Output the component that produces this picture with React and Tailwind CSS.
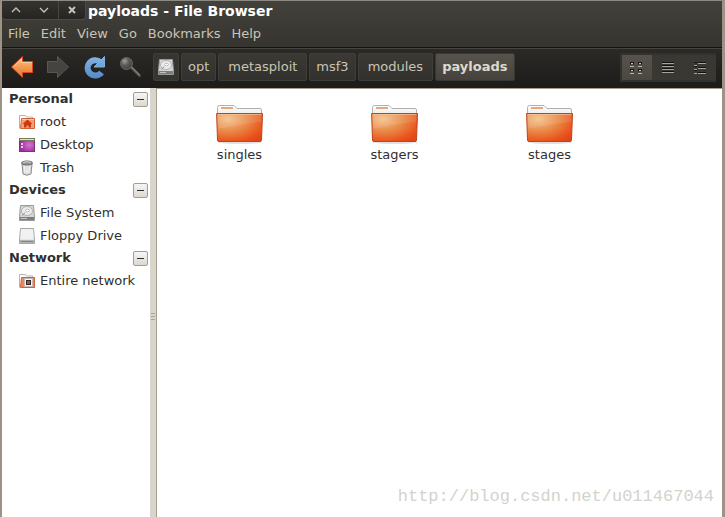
import React, { useState } from "react";

const places = [
  {
    title: "Personal",
    items: [
      { name: "root", icon: HomeIcon },
      { name: "Desktop", icon: DesktopIcon },
      { name: "Trash", icon: TrashIcon },
    ],
  },
  {
    title: "Devices",
    items: [
      { name: "File System", icon: DiskIcon },
      { name: "Floppy Drive", icon: FloppyIcon },
    ],
  },
  {
    title: "Network",
    items: [{ name: "Entire network", icon: NetworkIcon }],
  },
];

const menus = ["File", "Edit", "View", "Go", "Bookmarks", "Help"];
const crumbs = ["opt", "metasploit", "msf3", "modules", "payloads"];
const folders = ["singles", "stagers", "stages"];

function BackIcon() {
  return (
    <svg width="24" height="24" viewBox="0 0 24 24">
      <defs>
        <linearGradient id="back" x1="0" y1="0" x2="0" y2="1">
          <stop offset="0" stopColor="#fbc58a" />
          <stop offset="0.5" stopColor="#f39b52" />
          <stop offset="1" stopColor="#e2703a" />
        </linearGradient>
      </defs>
      <path d="M1.5 12 12.5 1.5V6.5H22.5V17.5H12.5V22.5Z" fill="url(#back)" stroke="#d9481c" strokeLinejoin="round" />
      <path d="M3.5 11.7 11.6 4V7.5H21.5" fill="none" stroke="#fde0b8" strokeOpacity="0.7" />
    </svg>
  );
}

function ForwardIcon() {
  return (
    <svg width="24" height="24" viewBox="0 0 24 24">
      <path d="M22.5 12 11.5 1.5V6.5H1.5V17.5H11.5V22.5Z" fill="#464441" stroke="#5a5753" strokeLinejoin="round" />
    </svg>
  );
}

function ReloadIcon() {
  return (
    <svg width="24" height="24" viewBox="0 0 24 24">
      <defs>
        <linearGradient id="reload" x1="0" y1="0" x2="0" y2="24" gradientUnits="userSpaceOnUse">
          <stop offset="0" stopColor="#8ab7e4" />
          <stop offset="1" stopColor="#5189c9" />
        </linearGradient>
      </defs>
      <path d="M18.500 7.200A7.700 7.700 0 1 0 19.500 17.500" fill="none" stroke="url(#reload)" strokeWidth="6" />
      <path d="M22.500 1.500V12H12Z" fill="url(#reload)" stroke="#7fb0e0" strokeLinejoin="round" />
    </svg>
  );
}

function SearchIcon() {
  return (
    <svg width="24" height="24" viewBox="0 0 24 24">
      <defs>
        <radialGradient id="lens" cx="0.35" cy="0.3" r="0.7">
          <stop offset="0" stopColor="#a09f9c" />
          <stop offset="0.5" stopColor="#5b5a57" />
          <stop offset="1" stopColor="#454441" />
        </radialGradient>
      </defs>
      <path d="m13.500 12.500 8 8" stroke="#5d5b57" strokeWidth="2.600" strokeLinecap="round" />
      <path d="m13.500 12 8 8" stroke="#96938d" />
      <circle cx="8.500" cy="8.500" r="6" fill="url(#lens)" stroke="#696763" />
    </svg>
  );
}

function DiskIcon() {
  return (
    <svg width="16" height="16" viewBox="0 0 16 16">
      <path d="M1.500.5H14.500L15.500 12V15.500H.5V12Z" fill="#d6d6d6" stroke="#9a9a9a" />
      <path d="M1 12H15V15H1Z" fill="#7d7d7d" />
      <path d="M2 13.500H8" stroke="#c4c4c4" />
      <ellipse cx="8" cy="6" rx="5.500" ry="4.500" fill="#ececec" stroke="#b0b0b0" />
      <ellipse cx="8.500" cy="5.500" rx="2" ry="1.300" fill="#fff" stroke="#a2a2a2" strokeWidth="0.7" />
      <path d="m3.500 10.500 2.500-3" stroke="#8a8a8a" />
    </svg>
  );
}

function FloppyIcon() {
  return (
    <svg width="16" height="16" viewBox="0 0 16 16">
      <path d="M1.500.5H14.500L15.500 12V15.500H.5V12Z" fill="#e6e6e6" stroke="#a6a6a6" />
      <path d="M2 1H14L14.500 11H1.500Z" fill="#f1f1f1" />
      <path d="M1 12H15V15H1Z" fill="#b4b4b4" />
      <path d="M2 13.500H14" stroke="#858585" />
    </svg>
  );
}

function HomeIcon() {
  return (
    <svg width="16" height="16" viewBox="0 0 16 16">
      <path d="M.5 14.500V1.500H6.500L7.500 3H13.500V5" fill="#fff" stroke="#b4b4b4" />
      <path d="M2.500 4.500H15.500V14.500H1.500Z" fill="#f0a075" stroke="#d0603a" />
      <path d="M3 5.500H15" stroke="#f8cba8" />
      <path d="M8.500 5.500 3.500 10H5V13.500H7.500V11.500H9.500V13.500H12V10H13.500Z" fill="#c93a12" />
    </svg>
  );
}

function DesktopIcon() {
  return (
    <svg width="16" height="16" viewBox="0 0 16 16">
      <defs>
        <radialGradient id="desk" cx="0.65" cy="0.5" r="0.6">
          <stop offset="0" stopColor="#d873d4" />
          <stop offset="1" stopColor="#9b2f9c" />
        </radialGradient>
      </defs>
      <rect x="0.5" y="1.500" width="15" height="13" fill="url(#desk)" stroke="#7a3478" />
      <path d="M0 1H16V4H0Z" fill="#77775a" />
      <path d="M1 2.500H15" stroke="#e3e3c8" />
      <path d="M2 6H4V8H2ZM2 9H4V11H2Z" fill="#e9c3e8" />
    </svg>
  );
}

function TrashIcon() {
  return (
    <svg width="16" height="16" viewBox="0 0 16 16">
      <path d="M3 4H13L12 14Q8 16.500 4 14Z" fill="#d9d9d9" stroke="#8d8d8d" />
      <path d="M5.500 6 6 13M8 6V13M10.500 6 10 13" stroke="#f7f7f7" />
      <ellipse cx="8" cy="3" rx="5.500" ry="2" fill="#8f9190" stroke="#6f716f" />
      <path d="M4 2.500Q8 1 12 2.500" fill="none" stroke="#d8d8d8" />
    </svg>
  );
}

function NetworkIcon() {
  return (
    <svg width="16" height="16" viewBox="0 0 16 16">
      <path d="M.5 14.500V1.500H6.500L7.500 3H13.500V5" fill="#fff" stroke="#b4b4b4" />
      <path d="M2.500 4.500H15.500V14.500H1.500Z" fill="#ea8a5c" stroke="#d0603a" />
      <rect x="5.500" y="5.500" width="8" height="8" fill="#f2f2f2" stroke="#cdb6aa" />
      <rect x="7.500" y="7.500" width="4" height="4" fill="#6a6a6a" stroke="#2c2c2c" />
    </svg>
  );
}

function FolderIcon() {
  return (
    <svg width="48" height="42" viewBox="0 0 48 42">
      <defs>
        <radialGradient id="folder" cx="0.25" cy="0.2" r="0.95">
          <stop offset="0" stopColor="#f4c188" />
          <stop offset="0.45" stopColor="#e98a49" />
          <stop offset="0.85" stopColor="#e9531b" />
          <stop offset="1" stopColor="#e0481a" />
        </radialGradient>
        <linearGradient id="paper" x1="0" y1="0" x2="0" y2="1">
          <stop offset="0" stopColor="#ffffff" />
          <stop offset="1" stopColor="#dadada" />
        </linearGradient>
      </defs>
      <ellipse cx="24" cy="39" rx="22" ry="2" fill="#000" fillOpacity="0.12" />
      <path d="M1.500 20V4.500Q1.500 2.500 3.500 2.500H18L21 5.500H44Q45.500 5.500 45.500 7V20Z" fill="url(#paper)" stroke="#b0b0b0" />
      <path d="M5 5H17" stroke="#eba67c" strokeWidth="2" />
      <path d="M.6 10.500H46.500L45.500 37Q45.400 38.500 44 38.500H3Q1.600 38.500 1.500 37Z" fill="url(#folder)" stroke="#bd4420" />
      <path d="M2 11.500H45.500" stroke="#f6c6a0" strokeOpacity="0.7" />
      <path d="M2 12H45.500L45.200 19Q30 20 2.300 26Z" fill="#fff" fillOpacity="0.1" />
    </svg>
  );
}

function GridViewIcon() {
  return (
    <svg width="12" height="13" viewBox="0 -1 12 13" shapeRendering="crispEdges">
      {[0, 8].map((x) =>
        [0, 7].map((y) => (
          <g key={`${x}-${y}`}>
            <rect x={x} y={y} width="4" height="2" fill="#161513" />
            <rect x={x + 1} y={y + 1} width="2" height="1" fill="#c9c7c2" />
            <rect x={x} y={y + 2} width="1" height="1" fill="#3a3732" />
            <rect x={x + 3} y={y + 2} width="1" height="1" fill="#3a3732" />
            <rect x={x} y={y + 4} width="4" height="1" fill="#b5b3ae" />
          </g>
        ))
      )}
    </svg>
  );
}

function ListViewIcon() {
  return (
    <svg width="12" height="13" viewBox="0 -1 12 13" shapeRendering="crispEdges">
      {[0, 3, 6, 9].map((y) => (
        <g key={y}>
          <rect y={y} width="12" height="1" fill="#131211" />
          <rect y={y + 1} width="12" height="1" fill="#a5a49f" />
        </g>
      ))}
    </svg>
  );
}

function CompactViewIcon() {
  return (
    <svg width="12" height="13" viewBox="0 -1 12 13" shapeRendering="crispEdges">
      {[0, 4, 8].map((y) => (
        <g key={y}>
          <rect y={y} width="3" height="1" fill="#131211" />
          <rect y={y + 3} width="3" height="1" fill="#a5a49f" />
        </g>
      ))}
      {[0, 5, 10].map((y) => (
        <g key={y}>
          <rect x="4" y={y} width="8" height="1" fill="#131211" />
          <rect x="4" y={y + 1} width="8" height="1" fill="#a5a49f" />
        </g>
      ))}
    </svg>
  );
}

const views = [
  { name: "Icon view", icon: GridViewIcon },
  { name: "List view", icon: ListViewIcon },
  { name: "Compact view", icon: CompactViewIcon },
];

const TitleBar = () => (
  <div className="flex h-5 items-center">
    <div className="flex h-[19px] w-[84px] self-start rounded-b border-r border-b border-[#4b4a45] bg-linear-to-b from-[#35342f] to-[#262522] text-[#c6c3b8]">
      <button type="button" aria-label="Minimize" className="flex w-7 items-center justify-center">
        <svg width="10" height="6" viewBox="0 0 10 6" fill="none" stroke="currentColor" strokeWidth="1.300">
          <path d="m1 5 4-4 4 4" />
        </svg>
      </button>
      <button type="button" aria-label="Maximize" className="flex w-7 items-center justify-center">
        <svg width="10" height="6" viewBox="0 0 10 6" fill="none" stroke="currentColor" strokeWidth="1.300">
          <path d="m1 1 4 4 4-4" />
        </svg>
      </button>
      <button type="button" aria-label="Close" className="flex flex-1 items-center justify-center border-l border-[#484742]">
        <svg width="8" height="8" viewBox="0 0 8 8" stroke="currentColor" strokeWidth="2">
          <path d="m1 1 6 6M7 1 1 7" />
        </svg>
      </button>
    </div>
    <h1 className="pl-0.5 text-[14px] leading-4 font-bold text-white">payloads - File Browser</h1>
  </div>
);

const MenuBar = () => (
  <nav className="flex h-[26px] items-center gap-[11px] pl-1.5 text-[#c9c5b5]">
    {menus.map((m) => (
      <button key={m} type="button">
        {m}
      </button>
    ))}
  </nav>
);

const Toolbar = () => {
  const [view, setView] = useState("Icon view");

  return (
    <div className="flex h-[41px] items-center border-t border-[#141311] bg-linear-to-b from-[#2b2a27] to-[#1e1c1a] pr-1.5 pb-0.5 pl-2 shadow-[inset_0_1px_0_#45443f]">
      <div className="flex items-center gap-3">
        <button type="button" aria-label="Back"><BackIcon /></button>
        <button type="button" aria-label="Forward"><ForwardIcon /></button>
        <button type="button" aria-label="Reload"><ReloadIcon /></button>
        <button type="button" aria-label="Search"><SearchIcon /></button>
      </div>

      <div className="ml-[11px] flex h-7 gap-0.5 text-[#c9c5b5]">
        <button
          type="button"
          aria-label="File System"
          className="flex w-[26px] items-center justify-center rounded-xs border border-[#3f3e39] bg-[#363530]">
          <DiskIcon />
        </button>
        {crumbs.map((c) => (
          <button
            key={c}
            type="button"
            className={
              c === "payloads"
                ? "rounded-xs border border-[#3a3833] bg-linear-to-b from-[#57534c] to-[#45423d] px-1.5 font-bold text-[#dedacb]"
                : `rounded-xs border border-[#3f3e39] bg-linear-to-b from-[#3a3934] to-[#32312d] ${
                    c.length > 4 ? "px-[9px]" : "px-1.5"
                  }`
            }>
            {c}
          </button>
        ))}
      </div>

      <div className="ml-auto flex h-[29px] bg-[#393833]">
        {views.map(({ name, icon: Icon }) => (
          <button
            key={name}
            type="button"
            aria-label={name}
            onClick={() => setView(name)}
            className={`flex w-8 items-center justify-center border-y-2 border-[#33322e] ${
              view === name ? "border-l-2 bg-linear-to-b from-[#57534c] to-[#4b4842] pr-0.5" : ""
            }`}>
            <Icon />
          </button>
        ))}
      </div>
    </div>
  );
};

const Sidebar = () => {
  const [closed, setClosed] = useState([]);

  const toggle = (title) =>
    setClosed(closed.includes(title) ? closed.filter((t) => t !== title) : [...closed, title]);

  return (
    <aside className="w-[148px] shrink-0 text-[#2f2f2f]">
      {places.map(({ title, items }) => (
        <section key={title}>
          <div className="flex h-[22px] items-center justify-between pr-0.5 pl-[7px]">
            <h2 className="font-bold">{title}</h2>
            <button
              type="button"
              aria-label={`Toggle ${title}`}
              onClick={() => toggle(title)}
              className="flex size-[15px] items-center justify-center rounded-xs border border-[#a39c8f] bg-linear-to-b from-[#f7f6f4] to-[#dcd8d1]">
              <span className="h-px w-[7px] bg-[#2f2f2f]" />
            </button>
          </div>
          {!closed.includes(title) && (
            <ul>
              {items.map(({ name, icon: Icon }) => (
                <li key={name}>
                  <a href="#" className="flex h-[23px] items-center gap-[5px] pl-[17px]">
                    <Icon />
                    {name}
                  </a>
                </li>
              ))}
            </ul>
          )}
        </section>
      ))}
    </aside>
  );
};

const App = () => {
  return (
    <div className="flex min-h-screen flex-col border-t border-r-[3px] border-l-2 border-t-[#8d8a83] border-r-[#9c9285] border-l-[#9c9285] bg-white font-['DejaVu_Sans',sans-serif] text-[13px] leading-4">
      <header className="bg-linear-to-b from-[#42413b] to-[#2a2926]">
        <TitleBar />
        <MenuBar />
        <Toolbar />
      </header>

      <div className="flex flex-1">
        <Sidebar />
        <div className="flex w-1.5 shrink-0 flex-col items-center justify-center gap-0.5 bg-[#d8d5cc] pt-7">
          <span className="h-px w-1 bg-[#aaa598]" />
          <span className="h-px w-1 bg-[#aaa598]" />
          <span className="h-px w-1 bg-[#aaa598]" />
        </div>
        <main className="flex flex-1 flex-col justify-between border-t border-l border-[#a89c8c]">
          <div className="flex flex-wrap pt-3.5 pl-[5px]">
            {folders.map((f) => (
              <a key={f} href="#" className="flex w-[155px] flex-col items-center gap-0.5 text-[#2f2f2f]">
                <FolderIcon />
                {f}
              </a>
            ))}
          </div>
          <p className="pr-2 pb-2 text-right font-['Liberation_Mono',monospace] text-[17px] leading-6 text-[#d3d3cc]">
            http://blog.csdn.net/u011467044
          </p>
        </main>
      </div>
    </div>
  );
};

export default App;
